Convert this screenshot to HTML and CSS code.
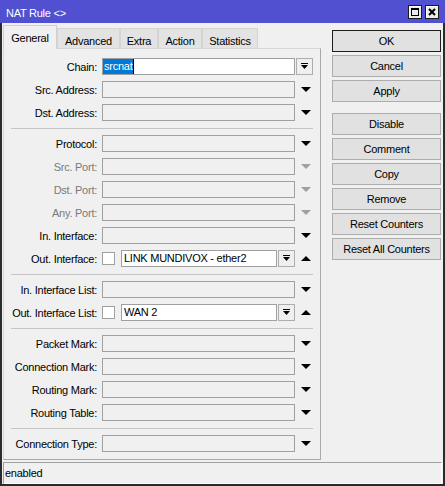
FILE: index.html
```html
<!DOCTYPE html>
<html>
<head>
<meta charset="utf-8">
<link rel="stylesheet" href="styles.css">
</head>
<body>
<div class="window">
  <div class="titlebar">
    <span class="title">NAT Rule &lt;&gt;</span>
    <div class="tbtns">
      <span class="tb"><svg width="12" height="12" viewBox="0 0 12 12"><rect x="2.5" y="2.5" width="7" height="7" fill="none" stroke="#000"/><rect x="2" y="2" width="8" height="2" fill="#000"/></svg></span>
      <span class="tb"><svg width="12" height="12" viewBox="0 0 12 12"><path d="M3 3L9 9M9 3L3 9" stroke="#000" stroke-width="2"/></svg></span>
    </div>
  </div>
  <div class="frame">
    <div class="body">
      <div class="main">
        <div class="tabs">
          <span class="tab active t-general">General</span>
          <span class="tab t-adv">Advanced</span>
          <span class="tab t-extra">Extra</span>
          <span class="tab t-action">Action</span>
          <span class="tab t-stats">Statistics</span>
        </div>
        <div class="panel">
          <div class="row">
            <span class="lbl">Chain:</span>
            <div class="field"><div class="box w"><span class="sel">srcnat</span><span class="caret"></span></div></div>
            <span class="cell"><span class="cb"><svg width="7" height="7" viewBox="0 0 7 7"><rect x="0" y="0" width="7" height="1"/><path d="M0 2H7L3.5 6Z"/></svg></span></span>
          </div>
          <div class="row">
            <span class="lbl">Src. Address:</span>
            <div class="field"><div class="box"></div></div>
            <span class="cell arr"><svg width="10" height="5" viewBox="0 0 10 5"><path d="M0 0H10L5 5Z"/></svg></span>
          </div>
          <div class="row">
            <span class="lbl">Dst. Address:</span>
            <div class="field"><div class="box"></div></div>
            <span class="cell arr"><svg width="10" height="5" viewBox="0 0 10 5"><path d="M0 0H10L5 5Z"/></svg></span>
          </div>
          <div class="sep"></div>
          <div class="row">
            <span class="lbl">Protocol:</span>
            <div class="field"><div class="box"></div></div>
            <span class="cell arr"><svg width="10" height="5" viewBox="0 0 10 5"><path d="M0 0H10L5 5Z"/></svg></span>
          </div>
          <div class="row dis">
            <span class="lbl">Src. Port:</span>
            <div class="field"><div class="box"></div></div>
            <span class="cell arr"><svg width="10" height="5" viewBox="0 0 10 5"><path d="M0 0H10L5 5Z"/></svg></span>
          </div>
          <div class="row dis">
            <span class="lbl">Dst. Port:</span>
            <div class="field"><div class="box"></div></div>
            <span class="cell arr"><svg width="10" height="5" viewBox="0 0 10 5"><path d="M0 0H10L5 5Z"/></svg></span>
          </div>
          <div class="row dis">
            <span class="lbl">Any. Port:</span>
            <div class="field"><div class="box"></div></div>
            <span class="cell arr"><svg width="10" height="5" viewBox="0 0 10 5"><path d="M0 0H10L5 5Z"/></svg></span>
          </div>
          <div class="row">
            <span class="lbl">In. Interface:</span>
            <div class="field"><div class="box"></div></div>
            <span class="cell arr"><svg width="10" height="5" viewBox="0 0 10 5"><path d="M0 0H10L5 5Z"/></svg></span>
          </div>
          <div class="row">
            <span class="lbl">Out. Interface:</span>
            <div class="field">
              <span class="chk"></span>
              <div class="box w"><span class="val">LINK MUNDIVOX - ether2</span></div>
              <span class="cb"><svg width="7" height="7" viewBox="0 0 7 7"><rect x="0" y="0" width="7" height="1"/><path d="M0 2H7L3.5 6Z"/></svg></span>
            </div>
            <span class="cell arr"><svg width="10" height="5" viewBox="0 0 10 5"><path d="M0 5H10L5 0Z"/></svg></span>
          </div>
          <div class="sep"></div>
          <div class="row">
            <span class="lbl">In. Interface List:</span>
            <div class="field"><div class="box"></div></div>
            <span class="cell arr"><svg width="10" height="5" viewBox="0 0 10 5"><path d="M0 0H10L5 5Z"/></svg></span>
          </div>
          <div class="row">
            <span class="lbl">Out. Interface List:</span>
            <div class="field">
              <span class="chk"></span>
              <div class="box w"><span class="val">WAN 2</span></div>
              <span class="cb"><svg width="7" height="7" viewBox="0 0 7 7"><rect x="0" y="0" width="7" height="1"/><path d="M0 2H7L3.5 6Z"/></svg></span>
            </div>
            <span class="cell arr"><svg width="10" height="5" viewBox="0 0 10 5"><path d="M0 5H10L5 0Z"/></svg></span>
          </div>
          <div class="sep"></div>
          <div class="row">
            <span class="lbl">Packet Mark:</span>
            <div class="field"><div class="box"></div></div>
            <span class="cell arr"><svg width="10" height="5" viewBox="0 0 10 5"><path d="M0 0H10L5 5Z"/></svg></span>
          </div>
          <div class="row">
            <span class="lbl">Connection Mark:</span>
            <div class="field"><div class="box"></div></div>
            <span class="cell arr"><svg width="10" height="5" viewBox="0 0 10 5"><path d="M0 0H10L5 5Z"/></svg></span>
          </div>
          <div class="row">
            <span class="lbl">Routing Mark:</span>
            <div class="field"><div class="box"></div></div>
            <span class="cell arr"><svg width="10" height="5" viewBox="0 0 10 5"><path d="M0 0H10L5 5Z"/></svg></span>
          </div>
          <div class="row">
            <span class="lbl">Routing Table:</span>
            <div class="field"><div class="box"></div></div>
            <span class="cell arr"><svg width="10" height="5" viewBox="0 0 10 5"><path d="M0 0H10L5 5Z"/></svg></span>
          </div>
          <div class="sep"></div>
          <div class="row">
            <span class="lbl">Connection Type:</span>
            <div class="field"><div class="box"></div></div>
            <span class="cell arr"><svg width="10" height="5" viewBox="0 0 10 5"><path d="M0 0H10L5 5Z"/></svg></span>
          </div>
        </div>
      </div>
      <div class="side">
        <span class="btn default">OK</span>
        <span class="btn">Cancel</span>
        <span class="btn">Apply</span>
        <span class="btn group">Disable</span>
        <span class="btn">Comment</span>
        <span class="btn">Copy</span>
        <span class="btn">Remove</span>
        <span class="btn">Reset Counters</span>
        <span class="btn">Reset All Counters</span>
      </div>
    </div>
    <div class="status">enabled</div>
  </div>
</div>
</body>
</html>
```

FILE: styles.css
```css
* { box-sizing: border-box; }
html, body { margin: 0; padding: 0; }
body {
  font-family: "Liberation Sans", Arial, sans-serif;
  font-size: 11px;
  letter-spacing: -0.25px;
  color: #000;
  background: #f0f0f0;
}
.window {
  width: 445px;
  height: 486px;
  display: flex;
  flex-direction: column;
  background: #f0f0f0;
}
.titlebar {
  flex: none;
  height: 23px;
  background: #5050d0;
  display: flex;
  justify-content: space-between;
  align-items: flex-start;
  padding: 0 6px 0 6px;
}
.title {
  color: #fff;
  padding-top: 4px;
  line-height: 19px;
}
.tbtns {
  display: flex;
  gap: 3px;
  padding-top: 5px;
}
.tb {
  width: 14px;
  height: 14px;
  background: #ececec;
  border: 1px solid #1a1a1a;
  box-shadow: inset 1px 1px 0 #fff;
  display: flex;
  align-items: center;
  justify-content: center;
}
.tb svg { display: block; }
.frame {
  flex: 1;
  display: flex;
  flex-direction: column;
  border: 2px solid #2b2b2b;
  border-top: none;
}
.body {
  flex: 1;
  display: flex;
}
.main {
  width: 319px;
  padding: 2px 0 0 1px;
  display: flex;
  flex-direction: column;
}
.tabs {
  height: 23px;
  display: flex;
  align-items: flex-end;
}
.tab {
  height: 20px;
  padding-top: 4px;
  line-height: 16px;
  text-align: center;
  background: #e3e3e3;
  border: 1px solid #d4d4d4;
  border-bottom: none;
  white-space: nowrap;
}
.tab.active {
  height: 24px;
  margin-bottom: -1px;
  background: #f0f0f0;
  border-color: #d0d0d0;
  position: relative;
  z-index: 1;
}
.t-general { width: 54px; }
.t-adv { width: 63px; }
.t-extra { width: 38px; }
.t-action { width: 44px; }
.t-stats { width: 56px; }
.panel {
  height: 412px;
  border: 1px solid #a9a9a9;
  border-top-color: #d6d6d6;
  border-left-color: #d6d6d6;
  padding: 9px 7px 7px 4px;
  display: flex;
  flex-direction: column;
  gap: 6px;
}
.row {
  height: 17px;
  display: flex;
  align-items: stretch;
}
.lbl {
  width: 89px;
  margin-right: 5px;
  text-align: right;
  line-height: 17px;
  padding-top: 1px;
  white-space: nowrap;
  flex: none;
}
.dis .lbl { color: #7a7a7a; }
.dis .arr svg { fill: #a0a0a0; }
.field {
  flex: 1;
  display: flex;
  align-items: center;
  min-width: 0;
}
.box {
  flex: 1;
  height: 17px;
  border: 1px solid #a0a0a0;
  background: transparent;
  display: flex;
  align-items: center;
  overflow: hidden;
  white-space: nowrap;
  min-width: 0;
}
.box.w { background: #fff; }
.sel {
  background: #0078d7;
  color: #fff;
  height: 15px;
  line-height: 15px;
  padding: 0 1px 0 1px;
}
.caret {
  width: 1px;
  height: 15px;
  background: #000;
}
.val {
  padding-left: 2px;
  line-height: 15px;
}
.chk {
  width: 13px;
  height: 13px;
  border: 1px solid #a0a0a0;
  background: #fff;
  margin-right: 6px;
  flex: none;
}
.field .cb { margin-left: 1px; }
.cb {
  width: 17px;
  height: 17px;
  border: 1px solid #adadad;
  background: #efefef;
  display: flex;
  align-items: center;
  justify-content: center;
  flex: none;
}
.cb svg { display: block; fill: #000; }
.cell {
  width: 17px;
  margin-left: 1px;
  flex: none;
  display: flex;
  align-items: center;
  justify-content: center;
}
.arr { padding-left: 2px; }
.arr svg { display: block; fill: #000; }
.sep {
  height: 2px;
  margin-left: 3px;
  border-bottom: 1px solid #c4c4c4;
}
.side {
  flex: 1;
  padding: 7px 0 0 11px;
  display: flex;
  flex-direction: column;
  gap: 3px;
}
.btn {
  width: 109px;
  height: 22px;
  border: 1px solid #adadad;
  background: #e1e1e1;
  text-align: center;
  line-height: 20px;
  white-space: nowrap;
}
.btn.default { border-color: #1e1e1e; }
.btn.group { margin-top: 8px; }
.status {
  height: 22px;
  margin: 0 1px;
  margin-top: 0;
  border: 1px solid #a0a0a0;
  border-right-color: #fff;
  border-bottom-color: #fff;
  padding-left: 1px;
  line-height: 20px;
}
```
